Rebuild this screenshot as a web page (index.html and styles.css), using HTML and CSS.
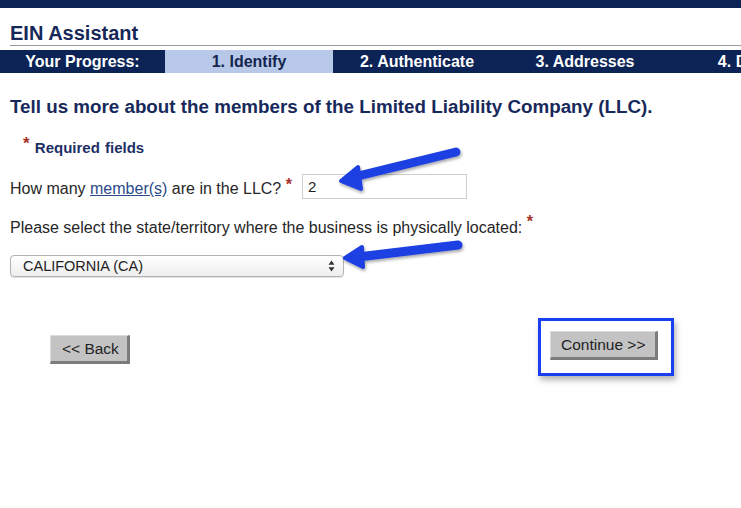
FILE: index.html
```html
<!DOCTYPE html>
<html lang="en">
<head>
<meta charset="utf-8">
<title>EIN Assistant</title>
<link rel="stylesheet" href="styles.css">
</head>
<body>
<div class="page">
  <div class="topbar"></div>
  <h1 class="title">EIN Assistant</h1>
  <div class="progress">
    <div class="step step-label">Your Progress:</div>
    <div class="step step-active">1. Identify</div>
    <div class="step">2. Authenticate</div>
    <div class="step">3. Addresses</div>
    <div class="step">4. Details</div>
  </div>

  <main class="content">
    <h2 class="heading">Tell us more about the members of the Limited Liability Company (LLC).</h2>
    <p class="required"><span class="star star-req">*</span> Required fields</p>

    <div class="field-row">
      <label class="label">How many <a href="#" class="link">member(s)</a> are in the LLC? <span class="star">*</span></label>
      <input class="text-input" type="text" value="2">
    </div>

    <p class="label label-block">Please select the state/territory where the business is physically located: <span class="star star-high">*</span></p>

    <div class="select">
      <span class="select-text">CALIFORNIA (CA)</span>
      <svg class="select-arrows" width="7" height="12" viewBox="0 0 7 12"><path d="M3.5 0.5 L6.5 4.8 L0.5 4.8 Z M3.5 11.5 L6.5 7.2 L0.5 7.2 Z" fill="#333"/></svg>
    </div>

    <div class="buttons">
      <button class="btn btn-back">&lt;&lt; Back</button>
      <div class="highlight">
        <button class="btn btn-continue">Continue &gt;&gt;</button>
      </div>
    </div>
  </main>

  <svg class="arrows" width="741" height="508" viewBox="0 0 741 508">
    <defs>
      <filter id="sh" x="-20%" y="-50%" width="140%" height="200%">
        <feDropShadow dx="1" dy="2" stdDeviation="1.5" flood-color="#000" flood-opacity="0.35"/>
      </filter>
    </defs>
    <g filter="url(#sh)" fill="#1d3fe2" stroke="#1d3fe2" stroke-linejoin="round" stroke-linecap="round">
      <path d="M456 152 L354 177" stroke-width="9" fill="none"/>
      <path d="M341 181 L358 167 L361 189 Z" stroke-width="4"/>
      <path d="M458 245 L358 257" stroke-width="9" fill="none"/>
      <path d="M345 258 L362 247 L363 267 Z" stroke-width="4"/>
    </g>
  </svg>
</div>
</body>
</html>
```

FILE: styles.css
```css
* { box-sizing: border-box; }

html, body {
  margin: 0;
  padding: 0;
  background: #fff;
}

body {
  font-family: "Liberation Sans", Arial, Helvetica, sans-serif;
  color: #2a2a2a;
  width: 741px;
  height: 508px;
  overflow: hidden;
}

.page {
  position: relative;
  width: 741px;
  height: 508px;
  overflow: hidden;
}

.topbar {
  height: 8px;
  background: #0c2356;
}

.title {
  margin: 14px 0 0 10px;
  font-size: 20px;
  line-height: 23px;
  font-weight: bold;
  color: #16285a;
  border-bottom: 1px solid #9a9a9a;
}

.progress {
  margin-top: 4px;
  height: 23px;
  display: flex;
  background: #0c2356;
  white-space: nowrap;
}

.step {
  flex: 0 0 168px;
  text-align: center;
  color: #fff;
  font-weight: bold;
  font-size: 16px;
  line-height: 23px;
}

.step-label {
  flex-basis: 165px;
}

.step-active {
  background: #b7c8e8;
  color: #14264f;
}

.content {
  padding-left: 10px;
}

.heading {
  margin: 23px 0 0 0;
  font-size: 18.8px;
  line-height: 22px;
  font-weight: bold;
  color: #17295b;
  white-space: nowrap;
}

.required {
  margin: 17px 0 0 13px;
  font-size: 15px;
  line-height: 18px;
  font-weight: bold;
  color: #1d2f66;
  word-spacing: 1px;
}

.star {
  color: #a63128;
  font-weight: bold;
  font-size: 16px;
  vertical-align: 4px;
}

.star-req {
  font-size: 17px;
}

.star-high {
  vertical-align: 6px;
}

.field-row {
  margin-top: 17px;
  display: flex;
  align-items: center;
}

.label {
  font-size: 16px;
  line-height: 19px;
  color: #262626;
  white-space: nowrap;
}

.link {
  color: #2b4a8a;
  text-decoration: underline;
}

.text-input {
  margin-left: 10px;
  width: 165px;
  height: 25px;
  border: 1px solid #cdcdcd;
  padding: 0 5px;
  font-family: inherit;
  font-size: 15px;
  color: #222;
  background: #fff;
  outline: none;
}

.label-block {
  margin: 13px 0 0 0;
}

.select {
  margin-top: 18px;
  width: 334px;
  height: 22px;
  border: 1px solid #b3b3b3;
  border-radius: 4px;
  background: linear-gradient(#ffffff, #eeeeee);
  box-shadow: 0 1px 1px rgba(0,0,0,0.12);
  display: flex;
  align-items: center;
  justify-content: space-between;
  padding: 0 8px 0 12px;
}

.select-text {
  font-size: 14.5px;
  color: #222;
}

.buttons {
  margin-top: 41px;
  padding-right: 67px;
  display: flex;
  justify-content: space-between;
  align-items: flex-start;
}

.btn {
  font-family: inherit;
  font-size: 15.5px;
  color: #222;
  background: #c3c3c3;
  border-style: solid;
  border-width: 1px 3px 3px 1px;
  border-color: #dcdcdc #7c7c7c #7c7c7c #dcdcdc;
  height: 29px;
  padding: 0 10px;
  line-height: 24px;
  white-space: nowrap;
  cursor: pointer;
}

.btn-back {
  margin: 17px 0 0 40px;
  width: 80px;
  padding-left: 11px;
  text-align: left;
}

.highlight {
  border: 3px solid #1a3ff2;
  padding: 10px 13px 13px 9px;
  box-shadow: 2px 4px 6px rgba(0,0,0,0.3);
}

.btn-continue {
  width: 108px;
  text-align: center;
}

.arrows {
  position: absolute;
  top: 0;
  left: 0;
  pointer-events: none;
}
```
